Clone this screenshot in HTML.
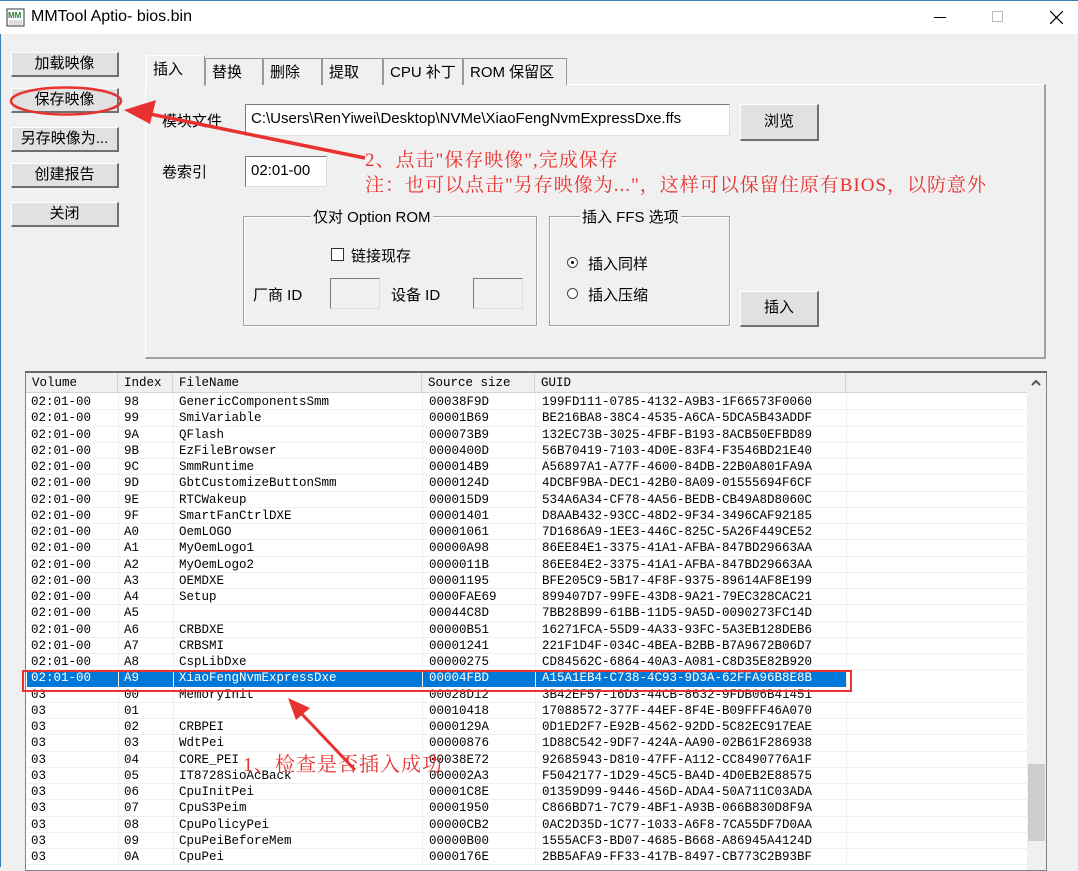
<!DOCTYPE html>
<html><head><meta charset="utf-8">
<style>
*{box-sizing:border-box;margin:0;padding:0}
body{width:1078px;height:867px;overflow:hidden;background:#f0f0f0;font-family:"Liberation Sans","Noto Sans CJK SC",sans-serif;font-size:14px;color:#000;position:relative}
.abs{position:absolute}
#title{left:0;top:0;width:1078px;height:34px;background:#fff;border-top:1px solid #3c7fb1}
#lb{left:0;top:34px;width:1px;height:833px;background:#3c7fb1}
.btn{position:absolute;background:#e1e1e1;border:1px solid #adadad;border-right:2px solid #707070;border-bottom:2px solid #707070;border-top:1px solid #fff;border-left:1px solid #fff;text-align:center;font-size:15px;line-height:21px}
.tab{position:absolute;top:58px;height:27px;border:1px solid #999;border-bottom:none;background:#f0f0f0;font-size:15px;line-height:28px;padding-left:6px}
.inp{position:absolute;background:#fff;border:1px solid #7a7a7a;border-right-color:#ddd;border-bottom-color:#ddd;font-size:15px;padding-left:5px;line-height:28px}
.grp{position:absolute;border:1px solid #a0a0a0;box-shadow:inset 1px 1px 0 #fff,1px 1px 0 #fff}
.gt{position:absolute;top:-11px;background:#f0f0f0;padding:0 2px;font-size:15px}
.lbl{position:absolute;font-size:15px}
#list{left:25px;top:371px;width:1022px;height:500px;background:#fff;border:1px solid #828282;border-top:2px solid #696969;overflow:hidden}
.row{position:absolute;left:1px;height:16.25px;width:1000px;font-family:"Liberation Mono",monospace;font-size:12.5px;line-height:17px;border-bottom:1px solid #f0f0f0}
.row span{position:absolute;top:0;white-space:pre}
.c1{left:4px}.c2{left:97px}.c3{left:152px}.c4{left:402px}.c5{left:515px}
.hd{position:absolute;left:0;top:0;height:20px;width:1001px;background:#f0f0f0;border-bottom:1px solid #d5d5d5;font-family:"Liberation Mono",monospace;font-size:12.5px;line-height:20px}
.hd span{position:absolute;top:0;height:20px;border-right:1px solid #d5d5d5;padding-left:6px}
.red{color:#e8322f;font-size:19px;letter-spacing:1px;font-family:"Liberation Serif","Noto Serif CJK SC",serif;white-space:nowrap}
</style></head><body>
<div id="title" class="abs">
 <svg class="abs" style="left:6px;top:7px" width="20" height="20" viewBox="0 0 20 20"><rect x="1" y="1" width="17" height="17" fill="#fff" stroke="#333"/><text x="2" y="10" font-size="8" font-family="Liberation Sans" fill="#2a7a3a" font-weight="bold">MM</text><path d="M3 12h13v5H3z" fill="#ddd"/></svg>
 <div class="abs" style="left:31px;top:7px;font-size:16px">MMTool Aptio- bios.bin</div>
 <div class="abs" style="left:934px;top:16px;width:12px;height:1px;background:#000"></div>
 <div class="abs" style="left:992px;top:10px;width:11px;height:11px;border:1px solid #bbb"></div>
 <svg class="abs" style="left:1050px;top:10px" width="13" height="13"><path d="M0 0L13 13M13 0L0 13" stroke="#000" stroke-width="1.2"/></svg>
</div>
<div id="lb" class="abs"></div>

<div class="btn" style="left:11px;top:52px;width:108px;height:25px">加载映像</div>
<div class="btn" style="left:11px;top:88px;width:108px;height:25px">保存映像</div>
<div class="btn" style="left:11px;top:127px;width:108px;height:25px">另存映像为...</div>
<div class="btn" style="left:11px;top:163px;width:108px;height:25px">创建报告</div>
<div class="btn" style="left:11px;top:202px;width:108px;height:25px">关闭</div>
<svg class="abs" style="left:8px;top:84px" width="118" height="34"><ellipse cx="58" cy="17" rx="55" ry="13.5" fill="none" stroke="#e8322f" stroke-width="2.5"/></svg>

<div class="abs" style="left:145px;top:84px;width:901px;height:275px;border:1px solid #fff;border-right:2px solid #a0a0a0;border-bottom:2px solid #a0a0a0;background:#f0f0f0"></div>
<div class="tab" style="left:205px;width:58px">替换</div>
<div class="tab" style="left:263px;width:59px">删除</div>
<div class="tab" style="left:322px;width:61px">提取</div>
<div class="tab" style="left:383px;width:80px">CPU 补丁</div>
<div class="tab" style="left:463px;width:104px">ROM 保留区</div>
<div class="tab" style="left:146px;top:55px;width:59px;height:31px;border-color:#fff;border-right:1px solid #999">插入</div>

<div class="lbl" style="left:162px;top:110px">模块文件</div>
<div class="inp" style="left:245px;top:104px;width:485px;height:32px">C:\Users\RenYiwei\Desktop\NVMe\XiaoFengNvmExpressDxe.ffs</div>
<div class="btn" style="left:740px;top:104px;width:79px;height:37px;line-height:33px">浏览</div>
<div class="lbl" style="left:162px;top:161px">卷索引</div>
<div class="inp" style="left:245px;top:156px;width:82px;height:31px">02:01-00</div>

<div class="grp" style="left:243px;top:216px;width:294px;height:110px">
 <div class="gt" style="left:67px">仅对 Option ROM</div>
 <div class="abs" style="left:87px;top:31px;width:13px;height:13px;border:1px solid #333;background:#fff"></div>
 <div class="lbl" style="left:107px;top:28px">链接现存</div>
 <div class="lbl" style="left:9px;top:67px">厂商 ID</div>
 <div class="inp" style="left:86px;top:61px;width:50px;height:31px;background:#f0f0f0"></div>
 <div class="lbl" style="left:147px;top:67px">设备 ID</div>
 <div class="inp" style="left:229px;top:61px;width:50px;height:31px;background:#f0f0f0"></div>
</div>
<div class="grp" style="left:549px;top:216px;width:181px;height:110px">
 <div class="gt" style="left:30px">插入 FFS 选项</div>
 <div class="abs" style="left:17px;top:40px;width:11px;height:11px;border-radius:50%;border:1px solid #444;background:#fff"><div class="abs" style="left:3px;top:3px;width:3px;height:3px;border-radius:50%;background:#000"></div></div>
 <div class="lbl" style="left:38px;top:36px">插入同样</div>
 <div class="abs" style="left:17px;top:71px;width:11px;height:11px;border-radius:50%;border:1px solid #444;background:#fff"></div>
 <div class="lbl" style="left:38px;top:67px">插入压缩</div>
</div>
<div class="btn" style="left:740px;top:291px;width:79px;height:36px;line-height:32px">插入</div>

<div id="list" class="abs">
 <div class="hd"><span style="left:0;width:92px">Volume</span><span style="left:92px;width:55px">Index</span><span style="left:147px;width:249px">FileName</span><span style="left:396px;width:113px">Source size</span><span style="left:509px;width:311px">GUID</span></div>
 <div class="abs" style="left:1001px;top:0;width:19px;height:500px;background:#f0f0f0"></div>
 <svg class="abs" style="left:1005px;top:6px" width="10" height="8"><path d="M1 6L5 2L9 6" stroke="#555" stroke-width="2" fill="none"/></svg>
 <div class="abs" style="left:1002px;top:391px;width:17px;height:77px;background:#cdcdcd"></div>
 <div id="rows"></div>
</div>

<script>
var d=[["02:01-00","98","GenericComponentsSmm","00038F9D","199FD111-0785-4132-A9B3-1F66573F0060"],
["02:01-00","99","SmiVariable","00001B69","BE216BA8-38C4-4535-A6CA-5DCA5B43ADDF"],
["02:01-00","9A","QFlash","000073B9","132EC73B-3025-4FBF-B193-8ACB50EFBD89"],
["02:01-00","9B","EzFileBrowser","0000400D","56B70419-7103-4D0E-83F4-F3546BD21E40"],
["02:01-00","9C","SmmRuntime","000014B9","A56897A1-A77F-4600-84DB-22B0A801FA9A"],
["02:01-00","9D","GbtCustomizeButtonSmm","0000124D","4DCBF9BA-DEC1-42B0-8A09-01555694F6CF"],
["02:01-00","9E","RTCWakeup","000015D9","534A6A34-CF78-4A56-BEDB-CB49A8D8060C"],
["02:01-00","9F","SmartFanCtrlDXE","00001401","D8AAB432-93CC-48D2-9F34-3496CAF92185"],
["02:01-00","A0","OemLOGO","00001061","7D1686A9-1EE3-446C-825C-5A26F449CE52"],
["02:01-00","A1","MyOemLogo1","00000A98","86EE84E1-3375-41A1-AFBA-847BD29663AA"],
["02:01-00","A2","MyOemLogo2","0000011B","86EE84E2-3375-41A1-AFBA-847BD29663AA"],
["02:01-00","A3","OEMDXE","00001195","BFE205C9-5B17-4F8F-9375-89614AF8E199"],
["02:01-00","A4","Setup","0000FAE69","899407D7-99FE-43D8-9A21-79EC328CAC21"],
["02:01-00","A5","","00044C8D","7BB28B99-61BB-11D5-9A5D-0090273FC14D"],
["02:01-00","A6","CRBDXE","00000B51","16271FCA-55D9-4A33-93FC-5A3EB128DEB6"],
["02:01-00","A7","CRBSMI","00001241","221F1D4F-034C-4BEA-B2BB-B7A9672B06D7"],
["02:01-00","A8","CspLibDxe","00000275","CD84562C-6864-40A3-A081-C8D35E82B920"],
["02:01-00","A9","XiaoFengNvmExpressDxe","00004FBD","A15A1EB4-C738-4C93-9D3A-62FFA96B8E8B"],
["03","00","MemoryInit","00028D12","3B42EF57-16D3-44CB-8632-9FDB06B41451"],
["03","01","","00010418","17088572-377F-44EF-8F4E-B09FFF46A070"],
["03","02","CRBPEI","0000129A","0D1ED2F7-E92B-4562-92DD-5C82EC917EAE"],
["03","03","WdtPei","00000876","1D88C542-9DF7-424A-AA90-02B61F286938"],
["03","04","CORE_PEI","00038E72","92685943-D810-47FF-A112-CC8490776A1F"],
["03","05","IT8728SioAcBack","000002A3","F5042177-1D29-45C5-BA4D-4D0EB2E88575"],
["03","06","CpuInitPei","00001C8E","01359D99-9446-456D-ADA4-50A711C03ADA"],
["03","07","CpuS3Peim","00001950","C866BD71-7C79-4BF1-A93B-066B830D8F9A"],
["03","08","CpuPolicyPei","00000CB2","0AC2D35D-1C77-1033-A6F8-7CA55DF7D0AA"],
["03","09","CpuPeiBeforeMem","00000B00","1555ACF3-BD07-4685-B668-A86945A4124D"],
["03","0A","CpuPei","0000176E","2BB5AFA9-FF33-417B-8497-CB773C2B93BF"]];
var h="";
d.forEach(function(r,i){var top=21+i*16.25;var sel=i==17;
h+='<div class="row" style="top:'+top+'px;'+(sel?'background:#0078d7;color:#fff;width:820px;border-color:#0078d7':'')+'"><span class="c1">'+r[0]+'</span><span class="c2">'+r[1]+'</span><span class="c3">'+r[2]+'</span><span class="c4">'+r[3]+'</span><span class="c5">'+r[4]+'</span></div>';});
document.getElementById('rows').innerHTML=h;
</script>
<div class="abs" style="left:118px;top:393px;width:1px;height:474px;background:#f0f0f0"></div>
<div class="abs" style="left:173px;top:393px;width:1px;height:474px;background:#f0f0f0"></div>
<div class="abs" style="left:422px;top:393px;width:1px;height:474px;background:#f0f0f0"></div>
<div class="abs" style="left:535px;top:393px;width:1px;height:474px;background:#f0f0f0"></div>
<div class="abs" style="left:846px;top:393px;width:1px;height:474px;background:#f0f0f0"></div>

<div class="abs" style="left:22px;top:670px;width:830px;height:22px;border:2.5px solid #e8322f"></div>
<div class="abs red" style="left:365px;top:145px">2、点击"保存映像",完成保存</div>
<div class="abs red" style="left:365px;top:170px">注：也可以点击"另存映像为..."，这样可以保留住原有BIOS，以防意外</div>
<div class="abs red" style="left:243px;top:748px;font-size:20px">1、检查是否插入成功</div>
<svg class="abs" style="left:0;top:0" width="1078" height="867">
 <path d="M365 158 L150 114" stroke="#e8322f" stroke-width="3.5" fill="none"/>
 <path d="M124 110 L156 100 L150 124 Z" fill="#e8322f"/>
 <path d="M355 770 L300 712" stroke="#e8322f" stroke-width="3" fill="none"/>
 <path d="M288 698 L310 708 L296 720 Z" fill="#e8322f"/>
</svg>
</body></html>
